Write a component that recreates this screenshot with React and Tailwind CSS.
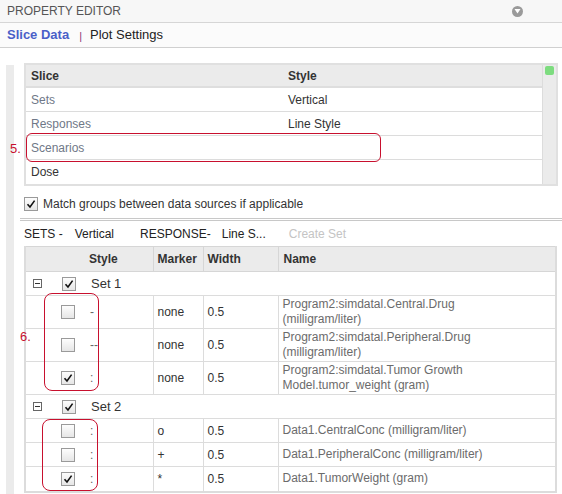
import React from "react";

const font = { fontFamily: '"Liberation Sans", Arial, sans-serif' };

function Check({ checked }) {
  return (
    <span className="inline-flex h-[14px] w-[14px] items-center justify-center border border-[#9a9a9a] bg-gradient-to-b from-[#fdfdfd] to-[#e6e6e6]">
      {checked && (
        <svg width="10" height="10" viewBox="0 0 10 10">
          <path d="M1.5 5.2 L4 8 L8.6 1.6" fill="none" stroke="#111" strokeWidth="1.6" />
        </svg>
      )}
    </span>
  );
}

function Collapse() {
  return (
    <span className="inline-flex h-[9px] w-[9px] items-center justify-center border border-[#666] bg-white">
      <span className="h-px w-[5px] bg-[#333]" />
    </span>
  );
}

const sets = [
  {
    name: "Set 1",
    rows: [
      { on: false, style: "-", marker: "none", width: "0.5", label: ["Program2:simdatal.Central.Drug", "(milligram/liter)"] },
      { on: false, style: "--", marker: "none", width: "0.5", label: ["Program2:simdatal.Peripheral.Drug", "(milligram/liter)"] },
      { on: true, style: ":", marker: "none", width: "0.5", label: ["Program2:simdatal.Tumor Growth", "Model.tumor_weight (gram)"] },
    ],
  },
  {
    name: "Set 2",
    rows: [
      { on: false, style: ":", marker: "o", width: "0.5", label: ["Data1.CentralConc (milligram/liter)"] },
      { on: false, style: ":", marker: "+", width: "0.5", label: ["Data1.PeripheralConc (milligram/liter)"] },
      { on: true, style: ":", marker: "*", width: "0.5", label: ["Data1.TumorWeight (gram)"] },
    ],
  },
];

export default function App() {
  return (
    <div className="relative flex h-[494px] w-[562px] flex-col overflow-hidden bg-white text-[12px]" style={font}>
      {/* title bar */}
      <div className="flex h-[23px] items-center justify-between border-b border-[#d6d6d6] bg-[#f7f7f7] pl-[7px] pr-[39px]">
        <span className="text-[12px] text-[#555]">PROPERTY EDITOR</span>
        <span className="flex h-[11px] w-[11px] items-center justify-center rounded-full bg-[#9a9a9a]">
          <svg width="7" height="6" viewBox="0 0 7 6">
            <path d="M0.5 1 L6.5 1 L3.5 5.5 Z" fill="#fff" />
          </svg>
        </span>
      </div>

      {/* tabs */}
      <div className="flex h-[25px] items-center border-b border-[#d0d0d0] bg-[#fbfbfb] pl-[7px] text-[13px]">
        <span className="font-bold text-[#4a5fc8]">Slice Data</span>
        <span className="ml-[10px] mt-[3px] text-[11px] text-[#8a3a78]">|</span>
        <span className="ml-[8px] text-[#222]">Plot Settings</span>
      </div>

      <div className="flex flex-1">
        <div className="ml-[6px] mt-[17px] w-[8px] bg-[#ebebeb]" />
        <div className="ml-[6px] flex flex-1 flex-col pt-[15px]">
          {/* slice table */}
          <div className="ml-[4px] mr-[4px] flex border-2 border-[#e0e0e0]">
            <div className="flex-1">
              <div className="flex h-[23px] items-center border-b-2 border-[#dedede] bg-[#ebebeb] font-bold text-[#333]">
                <span className="w-[257px] pl-[5px]">Slice</span>
                <span className="pl-[5px]">Style</span>
              </div>
              {[
                ["Sets", "Vertical", "text-[#6f7887]"],
                ["Responses", "Line Style", "text-[#6f7887]"],
                ["Scenarios", "", "text-[#6f7887]"],
                ["Dose", "", "text-[#333]"],
              ].map(([a, b, c], i) => (
                <div key={a} className={`flex h-[24px] items-center ${i < 3 ? "border-b border-[#dcdcdc]" : ""}`}>
                  <span className={`w-[257px] pl-[5px] ${c}`}>{a}</span>
                  <span className="pl-[5px] text-[#333]">{b}</span>
                </div>
              ))}
            </div>
            <div className="w-[14px] border-l border-[#dcdcdc] bg-[#ebebeb] pt-[1px]">
              <div className="mx-auto h-[9px] w-[9px] rounded-[2px] bg-[#7ddc7f]" />
            </div>
          </div>

          {/* match groups */}
          <div className="ml-[4px] mt-[10px] flex h-[16px] items-center gap-[5px] text-[#333]">
            <Check checked />
            <span>Match groups between data sources if applicable</span>
          </div>

          <div className="mt-[6px] h-[3px] border-y border-[#c8c8c8]" />

          {/* sets / response line */}
          <div className="ml-[4px] mt-[4px] flex h-[18px] items-center text-[#222]">
            <span>SETS -</span>
            <span className="ml-[12px]">Vertical</span>
            <span className="ml-[26px]">RESPONSE-</span>
            <span className="ml-[11px]">Line S...</span>
            <span className="ml-[23px] text-[#c4c4c4]">Create Set</span>
          </div>

          {/* sets table */}
          <div className="ml-[4px] mr-[5px] mt-[3px] border-2 border-t-0 border-[#dcdcdc]">
            <table className="w-full border-collapse text-[12px]">
              <colgroup>
                <col className="w-[127px]" />
                <col className="w-[50px]" />
                <col className="w-[75px]" />
                <col />
              </colgroup>
              <thead>
                <tr className="h-[25px] border-y border-[#d6d6d6] bg-[#ebebeb] text-left font-bold text-[#333]">
                  <th className="pl-[63px] font-bold">Style</th>
                  <th className="border-l border-[#d6d6d6] pl-[4px] font-bold">Marker</th>
                  <th className="border-l border-[#d6d6d6] pl-[4px] font-bold">Width</th>
                  <th className="border-l border-[#d6d6d6] pl-[5px] font-bold">Name</th>
                </tr>
              </thead>
              <tbody>
                {sets.map((s) => (
                  <React.Fragment key={s.name}>
                    <tr className="h-[24px] border-b border-[#dcdcdc]">
                      <td colSpan={4}>
                        <div className="flex items-center">
                          <span className="ml-[7px] flex">
                            <Collapse />
                          </span>
                          <span className="ml-[20px] flex">
                            <Check checked />
                          </span>
                          <span className="ml-[15px] text-[13px] text-[#333]">{s.name}</span>
                        </div>
                      </td>
                    </tr>
                    {s.rows.map((r, i) => (
                      <tr
                        key={i}
                        className={`${r.label.length > 1 ? "h-[33px]" : "h-[24px]"} ${
                          i < s.rows.length - 1 || s.name === "Set 1" ? "border-b border-[#dcdcdc]" : ""
                        }`}
                      >
                        <td>
                          <div className="flex items-center">
                            <span className="ml-[35px] flex">
                              <Check checked={r.on} />
                            </span>
                            <span className="ml-[15px] text-[#666]">{r.style}</span>
                          </div>
                        </td>
                        <td className="border-l border-[#dcdcdc] pl-[4px] text-[#333]">{r.marker}</td>
                        <td className="border-l border-[#dcdcdc] pl-[4px] text-[#333]">{r.width}</td>
                        <td className="border-l border-[#dcdcdc] pl-[4px] leading-[15px] text-[#6b6b6b]">
                          {r.label.map((l) => (
                            <div key={l}>{l}</div>
                          ))}
                        </td>
                      </tr>
                    ))}
                  </React.Fragment>
                ))}
              </tbody>
            </table>
          </div>
        </div>
      </div>

      {/* annotations */}
      <div className="absolute left-[26px] top-[133px] h-[29px] w-[355px] rounded-[6px] border border-[#c8102e]" />
      <span className="absolute left-[10px] top-[139px] text-[13px] text-[#c8102e]">5.</span>
      <div className="absolute left-[44px] top-[293px] h-[98px] w-[55px] rounded-[8px] border border-[#c8102e]" />
      <div className="absolute left-[42px] top-[419px] h-[72px] w-[56px] rounded-[8px] border border-[#c8102e]" />
      <span className="absolute left-[20px] top-[327px] text-[13px] text-[#c8102e]">6.</span>
    </div>
  );
}
